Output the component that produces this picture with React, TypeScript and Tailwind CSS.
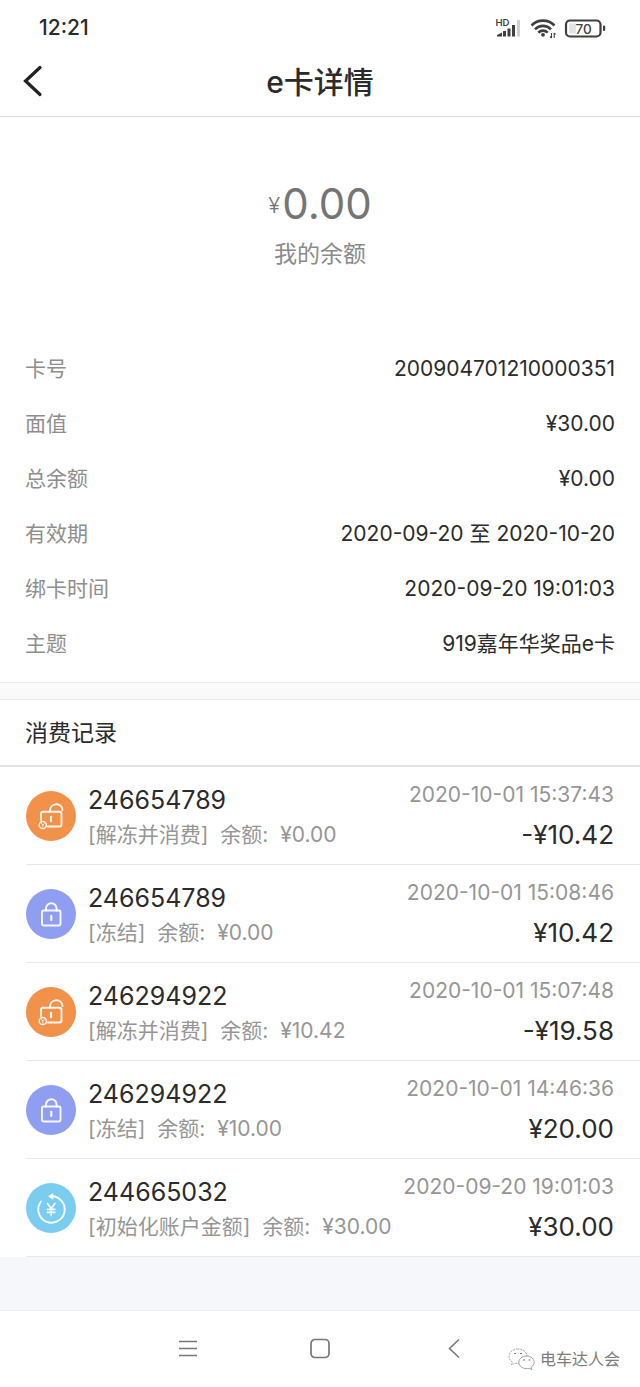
import type { ReactNode } from "react";

type Kind = "unlock" | "lock" | "init";

const details: { label: string; value: string }[] = [
  { label: "卡号", value: "200904701210000351" },
  { label: "面值", value: "¥30.00" },
  { label: "总余额", value: "¥0.00" },
  { label: "有效期", value: "2020-09-20 至 2020-10-20" },
  { label: "绑卡时间", value: "2020-09-20 19:01:03" },
  { label: "主题", value: "919嘉年华奖品e卡" },
];

const records: { id: string; kind: Kind; type: string; balance: string; time: string; amount: string }[] = [
  { id: "246654789", kind: "unlock", type: "解冻并消费", balance: "¥0.00", time: "2020-10-01 15:37:43", amount: "-¥10.42" },
  { id: "246654789", kind: "lock", type: "冻结", balance: "¥0.00", time: "2020-10-01 15:08:46", amount: "¥10.42" },
  { id: "246294922", kind: "unlock", type: "解冻并消费", balance: "¥10.42", time: "2020-10-01 15:07:48", amount: "-¥19.58" },
  { id: "246294922", kind: "lock", type: "冻结", balance: "¥10.00", time: "2020-10-01 14:46:36", amount: "¥20.00" },
  { id: "244665032", kind: "init", type: "初始化账户金额", balance: "¥30.00", time: "2020-09-20 19:01:03", amount: "¥30.00" },
];

function Badge({ className, children }: { className: string; children: ReactNode }) {
  return (
    <svg
      viewBox="0 0 50 50"
      className={"size-[50px] shrink-0 rounded-full " + className}
      fill="none"
      stroke="white"
      strokeOpacity=".92"
      strokeWidth="1.9"
      strokeLinecap="round"
      strokeLinejoin="round"
      aria-hidden="true"
    >
      {children}
    </svg>
  );
}

function RecordIcon({ kind }: { kind: Kind }) {
  if (kind === "unlock") {
    return (
      <Badge className="bg-[#f2914a]">
        <path d="M15 29V22.800a2 2 0 0 1 2-2h16.500a2 2 0 0 1 2 2v10.700a2 2 0 0 1-2 2H21.500" />
        <path d="M24 20.500v-1a6.300 6.300 0 0 1 12.400-1.500v1" />
        <path d="M25 25.800v4.400" strokeWidth="2.200" />
        <circle cx="16.800" cy="34" r="3.600" strokeWidth="1.500" />
        <path d="M15.500 32.500l1.300 1.500 1.300-1.500M16.800 34v2" strokeWidth=".9" />
      </Badge>
    );
  }
  if (kind === "lock") {
    return (
      <Badge className="bg-[#8f9ef0]">
        <rect x="16" y="21.500" width="18.500" height="15" rx="1.500" />
        <path d="M20 21.500v-2a5.300 5.300 0 0 1 10.600 0v2" />
        <path d="M25.300 26.800v4.200" strokeWidth="2.200" />
      </Badge>
    );
  }
  return (
    <Badge className="bg-[#7bcdf0]">
      <path d="M15 18.500A13.200 13.200 0 1 0 25 13.300" />
      <path d="M26.500 11l-3.800 2.400 3.800 2.400z" fill="white" strokeWidth="1" />
      <path d="M21.500 20.500l3.700 5 3.700-5M25.200 26v6.500M21.500 26.300h7.400M21.500 29.300h7.400" strokeWidth="1.700" />
    </Badge>
  );
}

function StatusIcons() {
  return (
    <svg viewBox="0 0 112 24" className="h-6 w-28" aria-hidden="true">
      <text x="-0.500" y="9.500" fontSize="9.500" fontWeight="600" fill="#3f3f3f" fontFamily="Inter">HD</text>
      <g fill="#3f3f3f">
        <path d="M1 20.500v-1.500l5-2.500v4z" />
        <rect x="7" y="15" width="3" height="5.500" />
        <rect x="11.500" y="12.500" width="3" height="8" />
        <rect x="16" y="9" width="3" height="11.500" />
      </g>
      <rect x="21" y="4" width="3" height="16.500" fill="#cfcfcf" />
      <g fill="none" stroke="#3f3f3f" strokeWidth="2.600">
        <path d="M35.500 9.500a16 16 0 0 1 23 0" />
        <path d="M39 13.300a11 11 0 0 1 16 0" />
        <path d="M42.300 16.600a6.600 6.600 0 0 1 9.400 0" />
      </g>
      <circle cx="47" cy="18.800" r="1.900" fill="#3f3f3f" />
      <path d="M55.500 17v5M55.500 22l-1.500-1.500M58.200 22v-5M58.200 17l1.300 1.500" fill="none" stroke="#3f3f3f" strokeWidth="1.100" />
      <rect x="70" y="4.500" width="34.500" height="16" rx="4" fill="none" stroke="#3f3f3f" strokeWidth="2.200" />
      <rect x="73" y="7.500" width="7" height="10" fill="#e4e4e4" />
      <text x="87.500" y="17.500" textAnchor="middle" fontSize="13.500" fontWeight="500" fill="#3f3f3f" fontFamily="Inter">70</text>
      <rect x="107" y="9.500" width="2.200" height="5.500" rx="1" fill="#3f3f3f" />
    </svg>
  );
}

function Watermark() {
  return (
    <div className="absolute right-5 bottom-4 flex items-center gap-1 text-[#7c7c7c]">
      <svg viewBox="0 0 28 24" className="h-6 w-7" fill="white" stroke="currentColor" strokeWidth=".7" aria-hidden="true">
        <path d="M10 2C5 2 1 5.200 1 9.300c0 2.400 1.300 4.400 3.400 5.700L3.500 18l3.300-1.700c1 .3 2 .4 3.200.4 5 0 9-3.200 9-7.400S15 2 10 2z" strokeDasharray="2 1" />
        <path d="M18.500 9c-4.300 0-7.700 2.800-7.700 6.300s3.400 6.300 7.700 6.300c.9 0 1.800-.1 2.600-.4l2.700 1.500-.7-2.600c1.900-1.200 3.100-2.900 3.100-4.800C26.200 11.800 22.800 9 18.500 9z" />
        <path d="M6 6.500h2M12 6.500h2M15 13h2M20.500 13h2" strokeWidth="1.200" />
      </svg>
      <span className="text-base leading-6">电车达人会</span>
    </div>
  );
}

export default function App() {
  return (
    <div className="flex min-h-screen flex-col bg-[#f5f7fa] font-['Inter','Noto_Sans_CJK_SC',sans-serif] text-[#2b2b2b]">
      <header className="border-b border-[#dcdcdc] bg-white">
        <div className="flex h-14 items-center justify-between pr-8 pl-[39px]">
          <span className="text-[21px] font-medium">12:21</span>
          <StatusIcons />
        </div>
        <div className="grid h-[60px] grid-cols-[1fr_auto_1fr] items-center px-5 pb-2">
          <button type="button" aria-label="返回" className="justify-self-start">
            <svg viewBox="0 0 26 34" className="h-[34px] w-[26px]" fill="none" stroke="#222" strokeWidth="3.200" strokeLinecap="round" aria-hidden="true">
              <path d="M20 2.500L5.500 16 20 29.500" />
            </svg>
          </button>
          <h1 className="text-[30px] leading-10 font-medium">e卡详情</h1>
        </div>
      </header>

      <main>
        <section className="bg-white pt-[58px] pb-[11px]">
          <div className="flex flex-col items-center text-[#757575]">
            <p className="flex h-14 items-center gap-0.5">
              <span className="pt-1 text-[22px] font-light">¥</span>
              <span className="text-[42px]">0.00</span>
            </p>
            <p className="mt-1.5 text-[23px] leading-[34px] text-[#8a8a8a]">我的余额</p>
          </div>
          <dl className="mt-[70px] px-[25px] text-[21px]">
            {details.map((d) => (
              <div key={d.label} className="flex h-[55px] items-center justify-between">
                <dt className="text-[#8e8e8e]">{d.label}</dt>
                <dd>{d.value}</dd>
              </div>
            ))}
          </dl>
        </section>

        <div className="h-[18px] border-y border-[#ececec] bg-[#fafafa]" />

        <section className="bg-white">
          <h2 className="flex h-[67px] items-center border-b-2 border-[#e2e2e2] px-[25px] pt-0.5 text-[23px]">消费记录</h2>
          <ul className="pl-[26px]">
            {records.map((r, i) => (
              <li key={i} className="flex h-[98px] items-center justify-between border-b border-[#e8e8e8] pr-[26px] whitespace-nowrap">
                <div className="flex items-center gap-3">
                  <RecordIcon kind={r.kind} />
                  <div className="pt-0.5">
                    <p className="text-[25px] leading-9">{r.id}</p>
                    <p className="text-[21px] leading-[34px] text-[#969696]">
                      <span className="mr-1.5">[{r.type}]</span> <span className="mr-1.5">余额:</span> {r.balance}
                    </p>
                  </div>
                </div>
                <div className="pt-1 text-right">
                  <p className="text-[21px] leading-[34px] text-[#969696]">{r.time}</p>
                  <p className="text-[26px] leading-[46px]">{r.amount}</p>
                </div>
              </li>
            ))}
          </ul>
        </section>
      </main>

      <nav className="relative mt-auto flex h-[77px] items-center justify-center gap-[110px] border-t border-[#eceef0] bg-white text-[#777]">
        <button type="button" aria-label="菜单">
          <svg viewBox="0 0 24 24" className="size-6" fill="none" stroke="currentColor" strokeWidth="1.600" aria-hidden="true">
            <path d="M5 4.500h18M5 11.500h18M5 18.500h18" />
          </svg>
        </button>
        <button type="button" aria-label="主页">
          <svg viewBox="0 0 24 24" className="size-6" fill="none" stroke="currentColor" strokeWidth="1.700" aria-hidden="true">
            <rect x="3" y="2.500" width="18" height="18" rx="4" />
          </svg>
        </button>
        <button type="button" aria-label="后退">
          <svg viewBox="0 0 24 24" className="size-6" fill="none" stroke="currentColor" strokeWidth="1.600" aria-hidden="true">
            <path d="M17 2.500l-9.500 9 9.500 9" />
          </svg>
        </button>
        <Watermark />
      </nav>
    </div>
  );
}
